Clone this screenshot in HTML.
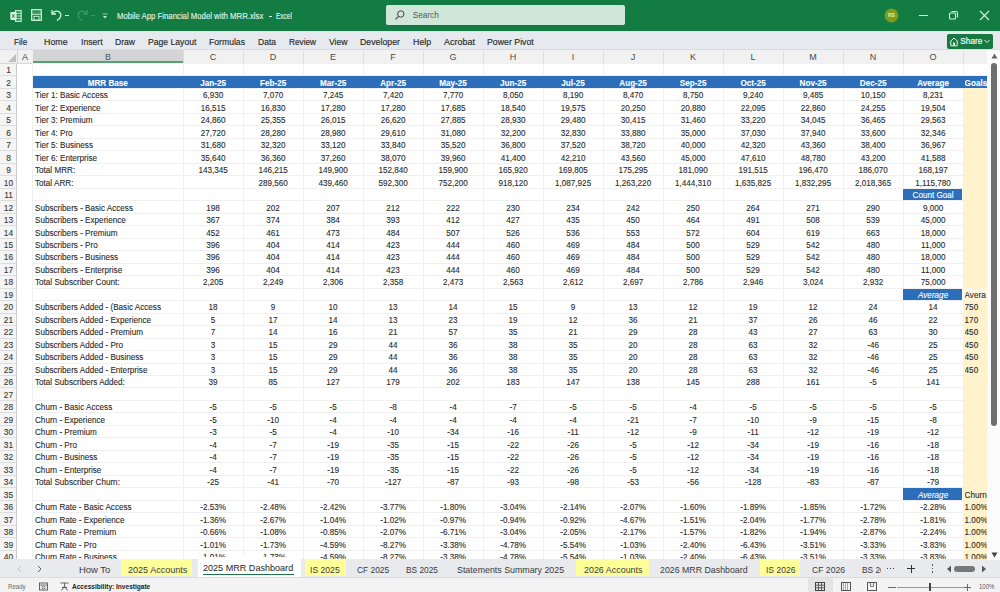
<!DOCTYPE html>
<html><head><meta charset="utf-8">
<style>
*{margin:0;padding:0;box-sizing:border-box}
html,body{width:1000px;height:592px;overflow:hidden;background:#fff;font-family:"Liberation Sans",sans-serif}
#title{position:absolute;left:0;top:0;width:1000px;height:31px;background:#137c43}
#ribbon{position:absolute;left:0;top:31px;width:1000px;height:17.5px;background:#e6e9ee}
.rt{position:absolute;top:35.7px;font-size:9.4px;transform-origin:0 0;color:#2a2a2a;-webkit-text-stroke:0.15px currentColor;white-space:nowrap;line-height:11px}
#colhdr{position:absolute;left:0;top:49.5px;width:988px;height:14px;background:#f1f1f1;border-bottom:1px solid #d8d8d8}
.ch{position:absolute;top:0;height:14px;font-size:9px;color:#4a4a4a;text-align:center;line-height:14px}
.cs{position:absolute;top:1px;width:1px;height:12px;background:#dcdcdc}
#grid{position:absolute;left:0;top:0;width:1000px;height:592px}
.hl{position:absolute;left:32px;width:955px;height:1px;background:#f0f0f0}
.vl{position:absolute;top:63.5px;height:496px;width:1px;background:#f0f0f0}
.yel{position:absolute;left:962.8px;width:24.2px;background:#fff2cc}
#rowhdr{position:absolute;left:0;top:0;width:17.5px;height:559px}
#rowhdrbg{position:absolute;left:0;top:63.5px;width:17px;height:496px;background:#f5f5f5;border-right:1px solid #c8c8c8}
.rn{position:absolute;left:0;width:17px;height:12.48px;font-size:8.4px;line-height:12.48px;padding-top:0.8px;text-align:center;color:#3a3a3a;-webkit-text-stroke:0.12px currentColor}
.rs{position:absolute;left:0;width:17px;height:1px;background:#dddddd}
.c{position:absolute;height:12.48px;font-size:8.13px;line-height:12.48px;padding-top:1.8px;color:#2a2a2a;-webkit-text-stroke:0.1px currentColor;text-align:center;white-space:nowrap;overflow:hidden}
.lab{text-align:left;overflow:visible}
.lft{text-align:left}
.hb{color:#fff;font-weight:bold}
.hdrbar{position:absolute;left:32.5px;width:954.5px;background:#2c6eb9}
.bluecell{position:absolute;background:#2c6eb9}
.wt{color:#fff}
.it{font-style:italic}
#tabs{position:absolute;left:0;top:559.2px;width:1000px;height:18.8px;background:#e8eaee}
.tab{position:absolute;top:560.5px;height:17px;font-size:9.05px;line-height:17px;color:#3a3a3a;white-space:nowrap}
.ytab{background:#ffff99}
#status{position:absolute;left:0;top:578px;width:1000px;height:14px;background:#f3f3f3}
</style></head><body>
<div id="title">
  <!-- excel icon -->
  <svg style="position:absolute;left:10px;top:9.5px" width="12" height="12" viewBox="0 0 12 12">
    <rect x="5.5" y="0.7" width="5.6" height="10.6" fill="none" stroke="#c9f2d6" stroke-width="1.2"/>
    <line x1="6" y1="3.3" x2="11" y2="3.3" stroke="#c9f2d6" stroke-width="1"/>
    <line x1="6" y1="6" x2="11" y2="6" stroke="#c9f2d6" stroke-width="1"/>
    <line x1="6" y1="8.7" x2="11" y2="8.7" stroke="#c9f2d6" stroke-width="1"/>
    <rect x="0.3" y="2" width="6.2" height="8" rx="1.2" fill="#d8f7e2"/>
    <path d="M2.2 4.2 L4.6 7.8 M4.6 4.2 L2.2 7.8" stroke="#1d6b3c" stroke-width="0.9"/>
  </svg>
  <!-- save -->
  <svg style="position:absolute;left:31px;top:9px" width="11" height="12" viewBox="0 0 11 12">
    <rect x="0.7" y="0.7" width="9.6" height="10.6" fill="none" stroke="#c9f2d6" stroke-width="1.3"/>
    <line x1="1" y1="5.2" x2="10" y2="5.2" stroke="#c9f2d6" stroke-width="1.1"/>
    <line x1="1" y1="3" x2="10" y2="3" stroke="#7fcf9c" stroke-width="0.6"/>
    <rect x="3" y="7.3" width="5" height="4" fill="none" stroke="#c9f2d6" stroke-width="1"/>
  </svg>
  <!-- undo -->
  <svg style="position:absolute;left:49px;top:7px" width="16" height="16" viewBox="0 0 16 16">
    <path d="M3 3 L3 7 L7 7" fill="none" stroke="#d6f5e0" stroke-width="1.3"/>
    <path d="M3.5 6.5 C5 3.5 10 3 11.5 6.5 C12.5 9 11 11.5 8 13.5" fill="none" stroke="#d6f5e0" stroke-width="1.3"/>
  </svg>
  <div style="position:absolute;left:65px;top:14.5px;width:4px;height:1px;background:#d6f5e0"></div>
  <!-- redo disabled -->
  <svg style="position:absolute;left:74px;top:7px" width="16" height="16" viewBox="0 0 16 16">
    <path d="M13 3 L13 7 L9 7" fill="none" stroke="#3f9a66" stroke-width="1.3"/>
    <path d="M12.5 6.5 C11 3.5 6 3 4.5 6.5 C3.5 9 5 11.5 8 13.5" fill="none" stroke="#3f9a66" stroke-width="1.3"/>
  </svg>
  <div style="position:absolute;left:91px;top:14.5px;width:4px;height:1px;background:#3f9a66"></div>
  <svg style="position:absolute;left:101px;top:11px" width="8" height="9" viewBox="0 0 8 9">
    <line x1="1.5" y1="3" x2="6.5" y2="3" stroke="#b5e3c5" stroke-width="0.8"/>
    <path d="M2 5 L6 5 L4 7.5 Z" fill="#c9f2d6"/>
  </svg>
  <div style="position:absolute;left:117.2px;top:10.7px;font-size:8.9px;line-height:11px;color:#e3f4e8;white-space:nowrap;-webkit-text-stroke:0.12px #e3f4e8;transform-origin:0 0;transform:scaleX(0.875)">Mobile App Financial Model with MRR.xlsx</div>
  <div style="position:absolute;left:268.5px;top:15.8px;width:3.5px;height:1px;background:#e3f4e8"></div>
  <div style="position:absolute;left:275.5px;top:10.7px;font-size:8.9px;line-height:11px;color:#e3f4e8;white-space:nowrap;-webkit-text-stroke:0.12px #e3f4e8;transform-origin:0 0;transform:scaleX(0.73)">Excel</div>
  <div style="position:absolute;left:386px;top:5px;width:239px;height:20px;background:#d0e6d8;border-radius:2px"></div>
  <svg style="position:absolute;left:394px;top:9px" width="12" height="12" viewBox="0 0 12 12">
    <circle cx="6.8" cy="5" r="3.2" fill="none" stroke="#445" stroke-width="1"/>
    <line x1="4.5" y1="7.3" x2="1.5" y2="10.3" stroke="#445" stroke-width="1.1"/>
  </svg>
  <div style="position:absolute;left:412.8px;top:9.5px;font-size:8.2px;line-height:11px;color:#505860">Search</div>
  <div style="position:absolute;left:884.9px;top:8.9px;width:13px;height:13px;border-radius:50%;background:#7f9d1c;box-shadow:0 0 1.5px #a6b52a"></div>
  <div style="position:absolute;left:884.9px;top:8.9px;width:13px;height:13px;font-size:5px;line-height:13px;text-align:center;color:#e8eea0;font-weight:bold">RS</div>
  <div style="position:absolute;left:919px;top:15px;width:9px;height:1px;background:#e0f0e6"></div>
  <svg style="position:absolute;left:948px;top:10px" width="11" height="11" viewBox="0 0 11 11">
    <rect x="1.5" y="3" width="6" height="6" rx="1" fill="none" stroke="#e0f0e6" stroke-width="1.1"/>
    <path d="M3.5 1.5 L8 1.5 Q9.5 1.5 9.5 3 L9.5 7.5" fill="none" stroke="#e0f0e6" stroke-width="1.1"/>
  </svg>
  <svg style="position:absolute;left:979px;top:10px" width="11" height="11" viewBox="0 0 11 11">
    <line x1="1" y1="1" x2="10" y2="10" stroke="#e0f0e6" stroke-width="1.1"/>
    <line x1="10" y1="1" x2="1" y2="10" stroke="#e0f0e6" stroke-width="1.1"/>
  </svg>
</div>
<div style="position:absolute;left:0;top:31px;width:1000px;height:1px;background:#b9e5c9"></div>
<div id="ribbon"></div>
<div style="position:absolute;left:0;top:48.5px;width:1000px;height:2px;background:#dcdcdc"></div>
<div class="rt" style="left:14px;transform:scaleX(0.874)">File</div>
<div class="rt" style="left:43.5px;transform:scaleX(0.943)">Home</div>
<div class="rt" style="left:80.5px;transform:scaleX(0.921)">Insert</div>
<div class="rt" style="left:115px;transform:scaleX(0.914)">Draw</div>
<div class="rt" style="left:147.5px;transform:scaleX(0.919)">Page Layout</div>
<div class="rt" style="left:209px;transform:scaleX(0.921)">Formulas</div>
<div class="rt" style="left:257.5px;transform:scaleX(0.909)">Data</div>
<div class="rt" style="left:289px;transform:scaleX(0.878)">Review</div>
<div class="rt" style="left:329px;transform:scaleX(0.923)">View</div>
<div class="rt" style="left:360px;transform:scaleX(0.936)">Developer</div>
<div class="rt" style="left:413px;transform:scaleX(0.944)">Help</div>
<div class="rt" style="left:443.5px;transform:scaleX(0.956)">Acrobat</div>
<div class="rt" style="left:487px;transform:scaleX(0.935)">Power Pivot</div>
<div style="position:absolute;left:946.5px;top:33.5px;width:46px;height:15px;background:#17793f;border-radius:2px"></div>
<svg style="position:absolute;left:948.5px;top:35.5px" width="10" height="11" viewBox="0 0 10 11"><path d="M1.8 5.5 L1.8 9.8 L8.2 9.8 L8.2 5.5" fill="none" stroke="#e6f5ea" stroke-width="1"/><path d="M0.8 6 L5 2 L9.2 6" fill="none" stroke="#e6f5ea" stroke-width="1"/><rect x="4" y="6.5" width="2" height="3" fill="#e6f5ea"/></svg>
<div style="position:absolute;left:960.3px;top:35.8px;font-size:8.3px;line-height:11px;color:#f0faf3;-webkit-text-stroke:0.2px #f0faf3">Share</div>
<svg style="position:absolute;left:984px;top:39px" width="6" height="5" viewBox="0 0 6 5"><path d="M0.5 1 L3 3.5 L5.5 1" fill="none" stroke="#e6f5ea" stroke-width="1"/></svg>

<div id="colhdr">
  <svg style="position:absolute;left:8px;top:4.5px" width="8" height="8" viewBox="0 0 8 8"><path d="M8 0 L8 8 L0 8 Z" fill="#bdbdbd"/></svg>
  <div style="position:absolute;left:17px;top:0;width:1px;height:14px;background:#d0d0d0"></div>
  <div class="ch" style="left:17.5px;width:15px">A</div>
  <div style="position:absolute;left:32.5px;top:0;width:150.8px;height:14px;background:#d2d4d6"></div>
  <div style="position:absolute;left:32.5px;top:11.8px;width:150.8px;height:2px;background:#5a9e76"></div>
  <div class="ch" style="left:32.5px;width:150.8px;color:#555">B</div>
  <div class="ch" style="left:183.1px;width:60px">C</div>
<div class="cs" style="left:182.6px"></div>
<div class="ch" style="left:243.1px;width:60px">D</div>
<div class="cs" style="left:242.6px"></div>
<div class="ch" style="left:303.1px;width:60px">E</div>
<div class="cs" style="left:302.6px"></div>
<div class="ch" style="left:363.1px;width:60px">F</div>
<div class="cs" style="left:362.6px"></div>
<div class="ch" style="left:423.1px;width:60px">G</div>
<div class="cs" style="left:422.6px"></div>
<div class="ch" style="left:483.1px;width:60px">H</div>
<div class="cs" style="left:482.6px"></div>
<div class="ch" style="left:543.1px;width:60px">I</div>
<div class="cs" style="left:542.6px"></div>
<div class="ch" style="left:603.1px;width:60px">J</div>
<div class="cs" style="left:602.6px"></div>
<div class="ch" style="left:663.1px;width:60px">K</div>
<div class="cs" style="left:662.6px"></div>
<div class="ch" style="left:723.1px;width:60px">L</div>
<div class="cs" style="left:722.6px"></div>
<div class="ch" style="left:783.1px;width:60px">M</div>
<div class="cs" style="left:782.6px"></div>
<div class="ch" style="left:843.1px;width:60px">N</div>
<div class="cs" style="left:842.6px"></div>
<div class="ch" style="left:903.1px;width:60px">O</div>
<div class="cs" style="left:902.6px"></div>
<div class="cs" style="left:962.6px"></div>
</div>

<div id="rowhdrbg"></div>
<div id="grid">
<div class="hl" style="top:63px"></div>
<div class="hl" style="top:75.48px"></div>
<div class="hl" style="top:87.96px"></div>
<div class="hl" style="top:100.44px"></div>
<div class="hl" style="top:112.92px"></div>
<div class="hl" style="top:125.4px"></div>
<div class="hl" style="top:137.88px"></div>
<div class="hl" style="top:150.36px"></div>
<div class="hl" style="top:162.84px"></div>
<div class="hl" style="top:175.32px"></div>
<div class="hl" style="top:187.8px"></div>
<div class="hl" style="top:200.28px"></div>
<div class="hl" style="top:212.76px"></div>
<div class="hl" style="top:225.24px"></div>
<div class="hl" style="top:237.72px"></div>
<div class="hl" style="top:250.2px"></div>
<div class="hl" style="top:262.68px"></div>
<div class="hl" style="top:275.16px"></div>
<div class="hl" style="top:287.64px"></div>
<div class="hl" style="top:300.12px"></div>
<div class="hl" style="top:312.6px"></div>
<div class="hl" style="top:325.08px"></div>
<div class="hl" style="top:337.56px"></div>
<div class="hl" style="top:350.04px"></div>
<div class="hl" style="top:362.52px"></div>
<div class="hl" style="top:375px"></div>
<div class="hl" style="top:387.48px"></div>
<div class="hl" style="top:399.96px"></div>
<div class="hl" style="top:412.44px"></div>
<div class="hl" style="top:424.92px"></div>
<div class="hl" style="top:437.4px"></div>
<div class="hl" style="top:449.88px"></div>
<div class="hl" style="top:462.36px"></div>
<div class="hl" style="top:474.84px"></div>
<div class="hl" style="top:487.32px"></div>
<div class="hl" style="top:499.8px"></div>
<div class="hl" style="top:512.28px"></div>
<div class="hl" style="top:524.76px"></div>
<div class="hl" style="top:537.24px"></div>
<div class="hl" style="top:549.72px"></div>
<div class="vl" style="left:182.6px"></div>
<div class="vl" style="left:242.6px"></div>
<div class="vl" style="left:302.6px"></div>
<div class="vl" style="left:362.6px"></div>
<div class="vl" style="left:422.6px"></div>
<div class="vl" style="left:482.6px"></div>
<div class="vl" style="left:542.6px"></div>
<div class="vl" style="left:602.6px"></div>
<div class="vl" style="left:662.6px"></div>
<div class="vl" style="left:722.6px"></div>
<div class="vl" style="left:782.6px"></div>
<div class="vl" style="left:842.6px"></div>
<div class="vl" style="left:902.6px"></div>
<div class="vl" style="left:962.6px"></div>
<div class="vl" style="left:32px"></div>
<div class="yel" style="top:87.96px;height:12.48px"></div>
<div class="yel" style="top:100.44px;height:12.48px"></div>
<div class="yel" style="top:112.92px;height:12.48px"></div>
<div class="yel" style="top:125.4px;height:12.48px"></div>
<div class="yel" style="top:137.88px;height:12.48px"></div>
<div class="yel" style="top:150.36px;height:12.48px"></div>
<div class="yel" style="top:162.84px;height:12.48px"></div>
<div class="yel" style="top:175.32px;height:12.48px"></div>
<div class="yel" style="top:187.8px;height:12.48px"></div>
<div class="yel" style="top:200.28px;height:12.48px"></div>
<div class="yel" style="top:212.76px;height:12.48px"></div>
<div class="yel" style="top:225.24px;height:12.48px"></div>
<div class="yel" style="top:237.72px;height:12.48px"></div>
<div class="yel" style="top:250.2px;height:12.48px"></div>
<div class="yel" style="top:262.68px;height:12.48px"></div>
<div class="yel" style="top:275.16px;height:12.48px"></div>
<div class="yel" style="top:287.64px;height:12.48px;background:#fff6e2"></div>
<div class="yel" style="top:300.12px;height:12.48px"></div>
<div class="yel" style="top:312.6px;height:12.48px"></div>
<div class="yel" style="top:325.08px;height:12.48px"></div>
<div class="yel" style="top:337.56px;height:12.48px"></div>
<div class="yel" style="top:350.04px;height:12.48px"></div>
<div class="yel" style="top:362.52px;height:12.48px"></div>
<div class="yel" style="top:375px;height:12.48px"></div>
<div class="yel" style="top:387.48px;height:12.48px"></div>
<div class="yel" style="top:399.96px;height:12.48px"></div>
<div class="yel" style="top:412.44px;height:12.48px"></div>
<div class="yel" style="top:424.92px;height:12.48px"></div>
<div class="yel" style="top:437.4px;height:12.48px"></div>
<div class="yel" style="top:449.88px;height:12.48px"></div>
<div class="yel" style="top:462.36px;height:12.48px"></div>
<div class="yel" style="top:474.84px;height:12.48px"></div>
<div class="yel" style="top:487.32px;height:12.48px"></div>
<div class="yel" style="top:499.8px;height:12.48px"></div>
<div class="yel" style="top:512.28px;height:12.48px"></div>
<div class="yel" style="top:524.76px;height:12.48px"></div>
<div class="yel" style="top:537.24px;height:12.48px"></div>
<div class="yel" style="top:549.72px;height:12.48px"></div>
<div id="rowhdr"><div class="rn" style="top:63.5px">1</div>
<div class="rs" style="top:75.48px"></div>
<div class="rn" style="top:75.98px">2</div>
<div class="rs" style="top:87.96px"></div>
<div class="rn" style="top:88.46px">3</div>
<div class="rs" style="top:100.44px"></div>
<div class="rn" style="top:100.94px">4</div>
<div class="rs" style="top:112.92px"></div>
<div class="rn" style="top:113.42px">5</div>
<div class="rs" style="top:125.4px"></div>
<div class="rn" style="top:125.9px">6</div>
<div class="rs" style="top:137.88px"></div>
<div class="rn" style="top:138.38px">7</div>
<div class="rs" style="top:150.36px"></div>
<div class="rn" style="top:150.86px">8</div>
<div class="rs" style="top:162.84px"></div>
<div class="rn" style="top:163.34px">9</div>
<div class="rs" style="top:175.32px"></div>
<div class="rn" style="top:175.82px">10</div>
<div class="rs" style="top:187.8px"></div>
<div class="rn" style="top:188.3px">11</div>
<div class="rs" style="top:200.28px"></div>
<div class="rn" style="top:200.78px">12</div>
<div class="rs" style="top:212.76px"></div>
<div class="rn" style="top:213.26px">13</div>
<div class="rs" style="top:225.24px"></div>
<div class="rn" style="top:225.74px">14</div>
<div class="rs" style="top:237.72px"></div>
<div class="rn" style="top:238.22px">15</div>
<div class="rs" style="top:250.2px"></div>
<div class="rn" style="top:250.7px">16</div>
<div class="rs" style="top:262.68px"></div>
<div class="rn" style="top:263.18px">17</div>
<div class="rs" style="top:275.16px"></div>
<div class="rn" style="top:275.66px">18</div>
<div class="rs" style="top:287.64px"></div>
<div class="rn" style="top:288.14px">19</div>
<div class="rs" style="top:300.12px"></div>
<div class="rn" style="top:300.62px">20</div>
<div class="rs" style="top:312.6px"></div>
<div class="rn" style="top:313.1px">21</div>
<div class="rs" style="top:325.08px"></div>
<div class="rn" style="top:325.58px">22</div>
<div class="rs" style="top:337.56px"></div>
<div class="rn" style="top:338.06px">23</div>
<div class="rs" style="top:350.04px"></div>
<div class="rn" style="top:350.54px">24</div>
<div class="rs" style="top:362.52px"></div>
<div class="rn" style="top:363.02px">25</div>
<div class="rs" style="top:375px"></div>
<div class="rn" style="top:375.5px">26</div>
<div class="rs" style="top:387.48px"></div>
<div class="rn" style="top:387.98px">27</div>
<div class="rs" style="top:399.96px"></div>
<div class="rn" style="top:400.46px">28</div>
<div class="rs" style="top:412.44px"></div>
<div class="rn" style="top:412.94px">29</div>
<div class="rs" style="top:424.92px"></div>
<div class="rn" style="top:425.42px">30</div>
<div class="rs" style="top:437.4px"></div>
<div class="rn" style="top:437.9px">31</div>
<div class="rs" style="top:449.88px"></div>
<div class="rn" style="top:450.38px">32</div>
<div class="rs" style="top:462.36px"></div>
<div class="rn" style="top:462.86px">33</div>
<div class="rs" style="top:474.84px"></div>
<div class="rn" style="top:475.34px">34</div>
<div class="rs" style="top:487.32px"></div>
<div class="rn" style="top:487.82px">35</div>
<div class="rs" style="top:499.8px"></div>
<div class="rn" style="top:500.3px">36</div>
<div class="rs" style="top:512.28px"></div>
<div class="rn" style="top:512.78px">37</div>
<div class="rs" style="top:524.76px"></div>
<div class="rn" style="top:525.26px">38</div>
<div class="rs" style="top:537.24px"></div>
<div class="rn" style="top:537.74px">39</div>
<div class="rs" style="top:549.72px"></div>
<div class="rn" style="top:550.22px">40</div>
<div class="rs" style="top:562.2px"></div></div>
<div class="hdrbar" style="top:75.98px;height:12.48px"></div>
<div class="c hb" style="top:75.98px;left:32.5px;width:150.6px">MRR Base</div>
<div class="c hb" style="top:75.98px;left:183.1px;width:60px">Jan-25</div>
<div class="c hb" style="top:75.98px;left:243.1px;width:60px">Feb-25</div>
<div class="c hb" style="top:75.98px;left:303.1px;width:60px">Mar-25</div>
<div class="c hb" style="top:75.98px;left:363.1px;width:60px">Apr-25</div>
<div class="c hb" style="top:75.98px;left:423.1px;width:60px">May-25</div>
<div class="c hb" style="top:75.98px;left:483.1px;width:60px">Jun-25</div>
<div class="c hb" style="top:75.98px;left:543.1px;width:60px">Jul-25</div>
<div class="c hb" style="top:75.98px;left:603.1px;width:60px">Aug-25</div>
<div class="c hb" style="top:75.98px;left:663.1px;width:60px">Sep-25</div>
<div class="c hb" style="top:75.98px;left:723.1px;width:60px">Oct-25</div>
<div class="c hb" style="top:75.98px;left:783.1px;width:60px">Nov-25</div>
<div class="c hb" style="top:75.98px;left:843.1px;width:60px">Dec-25</div>
<div class="c hb" style="top:75.98px;left:903.1px;width:60px">Average</div>
<div class="c hb lft" style="top:75.98px;left:964.6px;width:22.4px">Goals</div>
<div class="c lab" style="top:88.46px;left:35px">Tier 1: Basic Access</div>
<div class="c" style="top:88.46px;left:183.1px;width:60px">6,930</div>
<div class="c" style="top:88.46px;left:243.1px;width:60px">7,070</div>
<div class="c" style="top:88.46px;left:303.1px;width:60px">7,245</div>
<div class="c" style="top:88.46px;left:363.1px;width:60px">7,420</div>
<div class="c" style="top:88.46px;left:423.1px;width:60px">7,770</div>
<div class="c" style="top:88.46px;left:483.1px;width:60px">8,050</div>
<div class="c" style="top:88.46px;left:543.1px;width:60px">8,190</div>
<div class="c" style="top:88.46px;left:603.1px;width:60px">8,470</div>
<div class="c" style="top:88.46px;left:663.1px;width:60px">8,750</div>
<div class="c" style="top:88.46px;left:723.1px;width:60px">9,240</div>
<div class="c" style="top:88.46px;left:783.1px;width:60px">9,485</div>
<div class="c" style="top:88.46px;left:843.1px;width:60px">10,150</div>
<div class="c" style="top:88.46px;left:903.1px;width:60px">8,231</div>
<div class="c lab" style="top:100.94px;left:35px">Tier 2: Experience</div>
<div class="c" style="top:100.94px;left:183.1px;width:60px">16,515</div>
<div class="c" style="top:100.94px;left:243.1px;width:60px">16,830</div>
<div class="c" style="top:100.94px;left:303.1px;width:60px">17,280</div>
<div class="c" style="top:100.94px;left:363.1px;width:60px">17,280</div>
<div class="c" style="top:100.94px;left:423.1px;width:60px">17,685</div>
<div class="c" style="top:100.94px;left:483.1px;width:60px">18,540</div>
<div class="c" style="top:100.94px;left:543.1px;width:60px">19,575</div>
<div class="c" style="top:100.94px;left:603.1px;width:60px">20,250</div>
<div class="c" style="top:100.94px;left:663.1px;width:60px">20,880</div>
<div class="c" style="top:100.94px;left:723.1px;width:60px">22,095</div>
<div class="c" style="top:100.94px;left:783.1px;width:60px">22,860</div>
<div class="c" style="top:100.94px;left:843.1px;width:60px">24,255</div>
<div class="c" style="top:100.94px;left:903.1px;width:60px">19,504</div>
<div class="c lab" style="top:113.42px;left:35px">Tier 3: Premium</div>
<div class="c" style="top:113.42px;left:183.1px;width:60px">24,860</div>
<div class="c" style="top:113.42px;left:243.1px;width:60px">25,355</div>
<div class="c" style="top:113.42px;left:303.1px;width:60px">26,015</div>
<div class="c" style="top:113.42px;left:363.1px;width:60px">26,620</div>
<div class="c" style="top:113.42px;left:423.1px;width:60px">27,885</div>
<div class="c" style="top:113.42px;left:483.1px;width:60px">28,930</div>
<div class="c" style="top:113.42px;left:543.1px;width:60px">29,480</div>
<div class="c" style="top:113.42px;left:603.1px;width:60px">30,415</div>
<div class="c" style="top:113.42px;left:663.1px;width:60px">31,460</div>
<div class="c" style="top:113.42px;left:723.1px;width:60px">33,220</div>
<div class="c" style="top:113.42px;left:783.1px;width:60px">34,045</div>
<div class="c" style="top:113.42px;left:843.1px;width:60px">36,465</div>
<div class="c" style="top:113.42px;left:903.1px;width:60px">29,563</div>
<div class="c lab" style="top:125.9px;left:35px">Tier 4: Pro</div>
<div class="c" style="top:125.9px;left:183.1px;width:60px">27,720</div>
<div class="c" style="top:125.9px;left:243.1px;width:60px">28,280</div>
<div class="c" style="top:125.9px;left:303.1px;width:60px">28,980</div>
<div class="c" style="top:125.9px;left:363.1px;width:60px">29,610</div>
<div class="c" style="top:125.9px;left:423.1px;width:60px">31,080</div>
<div class="c" style="top:125.9px;left:483.1px;width:60px">32,200</div>
<div class="c" style="top:125.9px;left:543.1px;width:60px">32,830</div>
<div class="c" style="top:125.9px;left:603.1px;width:60px">33,880</div>
<div class="c" style="top:125.9px;left:663.1px;width:60px">35,000</div>
<div class="c" style="top:125.9px;left:723.1px;width:60px">37,030</div>
<div class="c" style="top:125.9px;left:783.1px;width:60px">37,940</div>
<div class="c" style="top:125.9px;left:843.1px;width:60px">33,600</div>
<div class="c" style="top:125.9px;left:903.1px;width:60px">32,346</div>
<div class="c lab" style="top:138.38px;left:35px">Tier 5: Business</div>
<div class="c" style="top:138.38px;left:183.1px;width:60px">31,680</div>
<div class="c" style="top:138.38px;left:243.1px;width:60px">32,320</div>
<div class="c" style="top:138.38px;left:303.1px;width:60px">33,120</div>
<div class="c" style="top:138.38px;left:363.1px;width:60px">33,840</div>
<div class="c" style="top:138.38px;left:423.1px;width:60px">35,520</div>
<div class="c" style="top:138.38px;left:483.1px;width:60px">36,800</div>
<div class="c" style="top:138.38px;left:543.1px;width:60px">37,520</div>
<div class="c" style="top:138.38px;left:603.1px;width:60px">38,720</div>
<div class="c" style="top:138.38px;left:663.1px;width:60px">40,000</div>
<div class="c" style="top:138.38px;left:723.1px;width:60px">42,320</div>
<div class="c" style="top:138.38px;left:783.1px;width:60px">43,360</div>
<div class="c" style="top:138.38px;left:843.1px;width:60px">38,400</div>
<div class="c" style="top:138.38px;left:903.1px;width:60px">36,967</div>
<div class="c lab" style="top:150.86px;left:35px">Tier 6: Enterprise</div>
<div class="c" style="top:150.86px;left:183.1px;width:60px">35,640</div>
<div class="c" style="top:150.86px;left:243.1px;width:60px">36,360</div>
<div class="c" style="top:150.86px;left:303.1px;width:60px">37,260</div>
<div class="c" style="top:150.86px;left:363.1px;width:60px">38,070</div>
<div class="c" style="top:150.86px;left:423.1px;width:60px">39,960</div>
<div class="c" style="top:150.86px;left:483.1px;width:60px">41,400</div>
<div class="c" style="top:150.86px;left:543.1px;width:60px">42,210</div>
<div class="c" style="top:150.86px;left:603.1px;width:60px">43,560</div>
<div class="c" style="top:150.86px;left:663.1px;width:60px">45,000</div>
<div class="c" style="top:150.86px;left:723.1px;width:60px">47,610</div>
<div class="c" style="top:150.86px;left:783.1px;width:60px">48,780</div>
<div class="c" style="top:150.86px;left:843.1px;width:60px">43,200</div>
<div class="c" style="top:150.86px;left:903.1px;width:60px">41,588</div>
<div class="c lab" style="top:163.34px;left:35px">Total MRR:</div>
<div class="c" style="top:163.34px;left:183.1px;width:60px">143,345</div>
<div class="c" style="top:163.34px;left:243.1px;width:60px">146,215</div>
<div class="c" style="top:163.34px;left:303.1px;width:60px">149,900</div>
<div class="c" style="top:163.34px;left:363.1px;width:60px">152,840</div>
<div class="c" style="top:163.34px;left:423.1px;width:60px">159,900</div>
<div class="c" style="top:163.34px;left:483.1px;width:60px">165,920</div>
<div class="c" style="top:163.34px;left:543.1px;width:60px">169,805</div>
<div class="c" style="top:163.34px;left:603.1px;width:60px">175,295</div>
<div class="c" style="top:163.34px;left:663.1px;width:60px">181,090</div>
<div class="c" style="top:163.34px;left:723.1px;width:60px">191,515</div>
<div class="c" style="top:163.34px;left:783.1px;width:60px">196,470</div>
<div class="c" style="top:163.34px;left:843.1px;width:60px">186,070</div>
<div class="c" style="top:163.34px;left:903.1px;width:60px">168,197</div>
<div class="c lab" style="top:175.82px;left:35px">Total ARR:</div>
<div class="c" style="top:175.82px;left:243.1px;width:60px">289,560</div>
<div class="c" style="top:175.82px;left:303.1px;width:60px">439,460</div>
<div class="c" style="top:175.82px;left:363.1px;width:60px">592,300</div>
<div class="c" style="top:175.82px;left:423.1px;width:60px">752,200</div>
<div class="c" style="top:175.82px;left:483.1px;width:60px">918,120</div>
<div class="c" style="top:175.82px;left:543.1px;width:60px">1,087,925</div>
<div class="c" style="top:175.82px;left:603.1px;width:60px">1,263,220</div>
<div class="c" style="top:175.82px;left:663.1px;width:60px">1,444,310</div>
<div class="c" style="top:175.82px;left:723.1px;width:60px">1,635,825</div>
<div class="c" style="top:175.82px;left:783.1px;width:60px">1,832,295</div>
<div class="c" style="top:175.82px;left:843.1px;width:60px">2,018,365</div>
<div class="c" style="top:175.82px;left:903.1px;width:60px">1,115,780</div>
<div class="bluecell" style="top:188.8px;left:902.8px;width:59.3px;height:11.58px"></div>
<div class="c wt" style="top:188.3px;left:903.1px;width:60px">Count Goal</div>
<div class="c lab" style="top:200.78px;left:35px">Subscribers - Basic Access</div>
<div class="c" style="top:200.78px;left:183.1px;width:60px">198</div>
<div class="c" style="top:200.78px;left:243.1px;width:60px">202</div>
<div class="c" style="top:200.78px;left:303.1px;width:60px">207</div>
<div class="c" style="top:200.78px;left:363.1px;width:60px">212</div>
<div class="c" style="top:200.78px;left:423.1px;width:60px">222</div>
<div class="c" style="top:200.78px;left:483.1px;width:60px">230</div>
<div class="c" style="top:200.78px;left:543.1px;width:60px">234</div>
<div class="c" style="top:200.78px;left:603.1px;width:60px">242</div>
<div class="c" style="top:200.78px;left:663.1px;width:60px">250</div>
<div class="c" style="top:200.78px;left:723.1px;width:60px">264</div>
<div class="c" style="top:200.78px;left:783.1px;width:60px">271</div>
<div class="c" style="top:200.78px;left:843.1px;width:60px">290</div>
<div class="c" style="top:200.78px;left:903.1px;width:60px">9,000</div>
<div class="c lab" style="top:213.26px;left:35px">Subscribers - Experience</div>
<div class="c" style="top:213.26px;left:183.1px;width:60px">367</div>
<div class="c" style="top:213.26px;left:243.1px;width:60px">374</div>
<div class="c" style="top:213.26px;left:303.1px;width:60px">384</div>
<div class="c" style="top:213.26px;left:363.1px;width:60px">393</div>
<div class="c" style="top:213.26px;left:423.1px;width:60px">412</div>
<div class="c" style="top:213.26px;left:483.1px;width:60px">427</div>
<div class="c" style="top:213.26px;left:543.1px;width:60px">435</div>
<div class="c" style="top:213.26px;left:603.1px;width:60px">450</div>
<div class="c" style="top:213.26px;left:663.1px;width:60px">464</div>
<div class="c" style="top:213.26px;left:723.1px;width:60px">491</div>
<div class="c" style="top:213.26px;left:783.1px;width:60px">508</div>
<div class="c" style="top:213.26px;left:843.1px;width:60px">539</div>
<div class="c" style="top:213.26px;left:903.1px;width:60px">45,000</div>
<div class="c lab" style="top:225.74px;left:35px">Subscribers - Premium</div>
<div class="c" style="top:225.74px;left:183.1px;width:60px">452</div>
<div class="c" style="top:225.74px;left:243.1px;width:60px">461</div>
<div class="c" style="top:225.74px;left:303.1px;width:60px">473</div>
<div class="c" style="top:225.74px;left:363.1px;width:60px">484</div>
<div class="c" style="top:225.74px;left:423.1px;width:60px">507</div>
<div class="c" style="top:225.74px;left:483.1px;width:60px">526</div>
<div class="c" style="top:225.74px;left:543.1px;width:60px">536</div>
<div class="c" style="top:225.74px;left:603.1px;width:60px">553</div>
<div class="c" style="top:225.74px;left:663.1px;width:60px">572</div>
<div class="c" style="top:225.74px;left:723.1px;width:60px">604</div>
<div class="c" style="top:225.74px;left:783.1px;width:60px">619</div>
<div class="c" style="top:225.74px;left:843.1px;width:60px">663</div>
<div class="c" style="top:225.74px;left:903.1px;width:60px">18,000</div>
<div class="c lab" style="top:238.22px;left:35px">Subscribers - Pro</div>
<div class="c" style="top:238.22px;left:183.1px;width:60px">396</div>
<div class="c" style="top:238.22px;left:243.1px;width:60px">404</div>
<div class="c" style="top:238.22px;left:303.1px;width:60px">414</div>
<div class="c" style="top:238.22px;left:363.1px;width:60px">423</div>
<div class="c" style="top:238.22px;left:423.1px;width:60px">444</div>
<div class="c" style="top:238.22px;left:483.1px;width:60px">460</div>
<div class="c" style="top:238.22px;left:543.1px;width:60px">469</div>
<div class="c" style="top:238.22px;left:603.1px;width:60px">484</div>
<div class="c" style="top:238.22px;left:663.1px;width:60px">500</div>
<div class="c" style="top:238.22px;left:723.1px;width:60px">529</div>
<div class="c" style="top:238.22px;left:783.1px;width:60px">542</div>
<div class="c" style="top:238.22px;left:843.1px;width:60px">480</div>
<div class="c" style="top:238.22px;left:903.1px;width:60px">11,000</div>
<div class="c lab" style="top:250.7px;left:35px">Subscribers - Business</div>
<div class="c" style="top:250.7px;left:183.1px;width:60px">396</div>
<div class="c" style="top:250.7px;left:243.1px;width:60px">404</div>
<div class="c" style="top:250.7px;left:303.1px;width:60px">414</div>
<div class="c" style="top:250.7px;left:363.1px;width:60px">423</div>
<div class="c" style="top:250.7px;left:423.1px;width:60px">444</div>
<div class="c" style="top:250.7px;left:483.1px;width:60px">460</div>
<div class="c" style="top:250.7px;left:543.1px;width:60px">469</div>
<div class="c" style="top:250.7px;left:603.1px;width:60px">484</div>
<div class="c" style="top:250.7px;left:663.1px;width:60px">500</div>
<div class="c" style="top:250.7px;left:723.1px;width:60px">529</div>
<div class="c" style="top:250.7px;left:783.1px;width:60px">542</div>
<div class="c" style="top:250.7px;left:843.1px;width:60px">480</div>
<div class="c" style="top:250.7px;left:903.1px;width:60px">18,000</div>
<div class="c lab" style="top:263.18px;left:35px">Subscribers - Enterprise</div>
<div class="c" style="top:263.18px;left:183.1px;width:60px">396</div>
<div class="c" style="top:263.18px;left:243.1px;width:60px">404</div>
<div class="c" style="top:263.18px;left:303.1px;width:60px">414</div>
<div class="c" style="top:263.18px;left:363.1px;width:60px">423</div>
<div class="c" style="top:263.18px;left:423.1px;width:60px">444</div>
<div class="c" style="top:263.18px;left:483.1px;width:60px">460</div>
<div class="c" style="top:263.18px;left:543.1px;width:60px">469</div>
<div class="c" style="top:263.18px;left:603.1px;width:60px">484</div>
<div class="c" style="top:263.18px;left:663.1px;width:60px">500</div>
<div class="c" style="top:263.18px;left:723.1px;width:60px">529</div>
<div class="c" style="top:263.18px;left:783.1px;width:60px">542</div>
<div class="c" style="top:263.18px;left:843.1px;width:60px">480</div>
<div class="c" style="top:263.18px;left:903.1px;width:60px">11,000</div>
<div class="c lab" style="top:275.66px;left:35px">Total Subscriber Count:</div>
<div class="c" style="top:275.66px;left:183.1px;width:60px">2,205</div>
<div class="c" style="top:275.66px;left:243.1px;width:60px">2,249</div>
<div class="c" style="top:275.66px;left:303.1px;width:60px">2,306</div>
<div class="c" style="top:275.66px;left:363.1px;width:60px">2,358</div>
<div class="c" style="top:275.66px;left:423.1px;width:60px">2,473</div>
<div class="c" style="top:275.66px;left:483.1px;width:60px">2,563</div>
<div class="c" style="top:275.66px;left:543.1px;width:60px">2,612</div>
<div class="c" style="top:275.66px;left:603.1px;width:60px">2,697</div>
<div class="c" style="top:275.66px;left:663.1px;width:60px">2,786</div>
<div class="c" style="top:275.66px;left:723.1px;width:60px">2,946</div>
<div class="c" style="top:275.66px;left:783.1px;width:60px">3,024</div>
<div class="c" style="top:275.66px;left:843.1px;width:60px">2,932</div>
<div class="c" style="top:275.66px;left:903.1px;width:60px">75,000</div>
<div class="bluecell" style="top:288.64px;left:902.8px;width:59.3px;height:11.58px"></div>
<div class="c wt it" style="top:288.14px;left:903.1px;width:60px">Average</div>
<div class="c lft" style="top:288.14px;left:964.6px;width:22.4px">Avera</div>
<div class="c lab" style="top:300.62px;left:35px">Subscribers Added - (Basic Access</div>
<div class="c" style="top:300.62px;left:183.1px;width:60px">18</div>
<div class="c" style="top:300.62px;left:243.1px;width:60px">9</div>
<div class="c" style="top:300.62px;left:303.1px;width:60px">10</div>
<div class="c" style="top:300.62px;left:363.1px;width:60px">13</div>
<div class="c" style="top:300.62px;left:423.1px;width:60px">14</div>
<div class="c" style="top:300.62px;left:483.1px;width:60px">15</div>
<div class="c" style="top:300.62px;left:543.1px;width:60px">9</div>
<div class="c" style="top:300.62px;left:603.1px;width:60px">13</div>
<div class="c" style="top:300.62px;left:663.1px;width:60px">12</div>
<div class="c" style="top:300.62px;left:723.1px;width:60px">19</div>
<div class="c" style="top:300.62px;left:783.1px;width:60px">12</div>
<div class="c" style="top:300.62px;left:843.1px;width:60px">24</div>
<div class="c" style="top:300.62px;left:903.1px;width:60px">14</div>
<div class="c lft" style="top:300.62px;left:964.6px;width:22.4px">750</div>
<div class="c lab" style="top:313.1px;left:35px">Subscribers Added - Experience</div>
<div class="c" style="top:313.1px;left:183.1px;width:60px">5</div>
<div class="c" style="top:313.1px;left:243.1px;width:60px">17</div>
<div class="c" style="top:313.1px;left:303.1px;width:60px">14</div>
<div class="c" style="top:313.1px;left:363.1px;width:60px">13</div>
<div class="c" style="top:313.1px;left:423.1px;width:60px">23</div>
<div class="c" style="top:313.1px;left:483.1px;width:60px">19</div>
<div class="c" style="top:313.1px;left:543.1px;width:60px">12</div>
<div class="c" style="top:313.1px;left:603.1px;width:60px">36</div>
<div class="c" style="top:313.1px;left:663.1px;width:60px">21</div>
<div class="c" style="top:313.1px;left:723.1px;width:60px">37</div>
<div class="c" style="top:313.1px;left:783.1px;width:60px">26</div>
<div class="c" style="top:313.1px;left:843.1px;width:60px">46</div>
<div class="c" style="top:313.1px;left:903.1px;width:60px">22</div>
<div class="c lft" style="top:313.1px;left:964.6px;width:22.4px">170</div>
<div class="c lab" style="top:325.58px;left:35px">Subscribers Added - Premium</div>
<div class="c" style="top:325.58px;left:183.1px;width:60px">7</div>
<div class="c" style="top:325.58px;left:243.1px;width:60px">14</div>
<div class="c" style="top:325.58px;left:303.1px;width:60px">16</div>
<div class="c" style="top:325.58px;left:363.1px;width:60px">21</div>
<div class="c" style="top:325.58px;left:423.1px;width:60px">57</div>
<div class="c" style="top:325.58px;left:483.1px;width:60px">35</div>
<div class="c" style="top:325.58px;left:543.1px;width:60px">21</div>
<div class="c" style="top:325.58px;left:603.1px;width:60px">29</div>
<div class="c" style="top:325.58px;left:663.1px;width:60px">28</div>
<div class="c" style="top:325.58px;left:723.1px;width:60px">43</div>
<div class="c" style="top:325.58px;left:783.1px;width:60px">27</div>
<div class="c" style="top:325.58px;left:843.1px;width:60px">63</div>
<div class="c" style="top:325.58px;left:903.1px;width:60px">30</div>
<div class="c lft" style="top:325.58px;left:964.6px;width:22.4px">450</div>
<div class="c lab" style="top:338.06px;left:35px">Subscribers Added - Pro</div>
<div class="c" style="top:338.06px;left:183.1px;width:60px">3</div>
<div class="c" style="top:338.06px;left:243.1px;width:60px">15</div>
<div class="c" style="top:338.06px;left:303.1px;width:60px">29</div>
<div class="c" style="top:338.06px;left:363.1px;width:60px">44</div>
<div class="c" style="top:338.06px;left:423.1px;width:60px">36</div>
<div class="c" style="top:338.06px;left:483.1px;width:60px">38</div>
<div class="c" style="top:338.06px;left:543.1px;width:60px">35</div>
<div class="c" style="top:338.06px;left:603.1px;width:60px">20</div>
<div class="c" style="top:338.06px;left:663.1px;width:60px">28</div>
<div class="c" style="top:338.06px;left:723.1px;width:60px">63</div>
<div class="c" style="top:338.06px;left:783.1px;width:60px">32</div>
<div class="c" style="top:338.06px;left:843.1px;width:60px">-46</div>
<div class="c" style="top:338.06px;left:903.1px;width:60px">25</div>
<div class="c lft" style="top:338.06px;left:964.6px;width:22.4px">450</div>
<div class="c lab" style="top:350.54px;left:35px">Subscribers Added - Business</div>
<div class="c" style="top:350.54px;left:183.1px;width:60px">3</div>
<div class="c" style="top:350.54px;left:243.1px;width:60px">15</div>
<div class="c" style="top:350.54px;left:303.1px;width:60px">29</div>
<div class="c" style="top:350.54px;left:363.1px;width:60px">44</div>
<div class="c" style="top:350.54px;left:423.1px;width:60px">36</div>
<div class="c" style="top:350.54px;left:483.1px;width:60px">38</div>
<div class="c" style="top:350.54px;left:543.1px;width:60px">35</div>
<div class="c" style="top:350.54px;left:603.1px;width:60px">20</div>
<div class="c" style="top:350.54px;left:663.1px;width:60px">28</div>
<div class="c" style="top:350.54px;left:723.1px;width:60px">63</div>
<div class="c" style="top:350.54px;left:783.1px;width:60px">32</div>
<div class="c" style="top:350.54px;left:843.1px;width:60px">-46</div>
<div class="c" style="top:350.54px;left:903.1px;width:60px">25</div>
<div class="c lft" style="top:350.54px;left:964.6px;width:22.4px">450</div>
<div class="c lab" style="top:363.02px;left:35px">Subscribers Added - Enterprise</div>
<div class="c" style="top:363.02px;left:183.1px;width:60px">3</div>
<div class="c" style="top:363.02px;left:243.1px;width:60px">15</div>
<div class="c" style="top:363.02px;left:303.1px;width:60px">29</div>
<div class="c" style="top:363.02px;left:363.1px;width:60px">44</div>
<div class="c" style="top:363.02px;left:423.1px;width:60px">36</div>
<div class="c" style="top:363.02px;left:483.1px;width:60px">38</div>
<div class="c" style="top:363.02px;left:543.1px;width:60px">35</div>
<div class="c" style="top:363.02px;left:603.1px;width:60px">20</div>
<div class="c" style="top:363.02px;left:663.1px;width:60px">28</div>
<div class="c" style="top:363.02px;left:723.1px;width:60px">63</div>
<div class="c" style="top:363.02px;left:783.1px;width:60px">32</div>
<div class="c" style="top:363.02px;left:843.1px;width:60px">-46</div>
<div class="c" style="top:363.02px;left:903.1px;width:60px">25</div>
<div class="c lft" style="top:363.02px;left:964.6px;width:22.4px">450</div>
<div class="c lab" style="top:375.5px;left:35px">Total Subscribers Added:</div>
<div class="c" style="top:375.5px;left:183.1px;width:60px">39</div>
<div class="c" style="top:375.5px;left:243.1px;width:60px">85</div>
<div class="c" style="top:375.5px;left:303.1px;width:60px">127</div>
<div class="c" style="top:375.5px;left:363.1px;width:60px">179</div>
<div class="c" style="top:375.5px;left:423.1px;width:60px">202</div>
<div class="c" style="top:375.5px;left:483.1px;width:60px">183</div>
<div class="c" style="top:375.5px;left:543.1px;width:60px">147</div>
<div class="c" style="top:375.5px;left:603.1px;width:60px">138</div>
<div class="c" style="top:375.5px;left:663.1px;width:60px">145</div>
<div class="c" style="top:375.5px;left:723.1px;width:60px">288</div>
<div class="c" style="top:375.5px;left:783.1px;width:60px">161</div>
<div class="c" style="top:375.5px;left:843.1px;width:60px">-5</div>
<div class="c" style="top:375.5px;left:903.1px;width:60px">141</div>
<div class="c lab" style="top:400.46px;left:35px">Churn - Basic Access</div>
<div class="c" style="top:400.46px;left:183.1px;width:60px">-5</div>
<div class="c" style="top:400.46px;left:243.1px;width:60px">-5</div>
<div class="c" style="top:400.46px;left:303.1px;width:60px">-5</div>
<div class="c" style="top:400.46px;left:363.1px;width:60px">-8</div>
<div class="c" style="top:400.46px;left:423.1px;width:60px">-4</div>
<div class="c" style="top:400.46px;left:483.1px;width:60px">-7</div>
<div class="c" style="top:400.46px;left:543.1px;width:60px">-5</div>
<div class="c" style="top:400.46px;left:603.1px;width:60px">-5</div>
<div class="c" style="top:400.46px;left:663.1px;width:60px">-4</div>
<div class="c" style="top:400.46px;left:723.1px;width:60px">-5</div>
<div class="c" style="top:400.46px;left:783.1px;width:60px">-5</div>
<div class="c" style="top:400.46px;left:843.1px;width:60px">-5</div>
<div class="c" style="top:400.46px;left:903.1px;width:60px">-5</div>
<div class="c lab" style="top:412.94px;left:35px">Churn - Experience</div>
<div class="c" style="top:412.94px;left:183.1px;width:60px">-5</div>
<div class="c" style="top:412.94px;left:243.1px;width:60px">-10</div>
<div class="c" style="top:412.94px;left:303.1px;width:60px">-4</div>
<div class="c" style="top:412.94px;left:363.1px;width:60px">-4</div>
<div class="c" style="top:412.94px;left:423.1px;width:60px">-4</div>
<div class="c" style="top:412.94px;left:483.1px;width:60px">-4</div>
<div class="c" style="top:412.94px;left:543.1px;width:60px">-4</div>
<div class="c" style="top:412.94px;left:603.1px;width:60px">-21</div>
<div class="c" style="top:412.94px;left:663.1px;width:60px">-7</div>
<div class="c" style="top:412.94px;left:723.1px;width:60px">-10</div>
<div class="c" style="top:412.94px;left:783.1px;width:60px">-9</div>
<div class="c" style="top:412.94px;left:843.1px;width:60px">-15</div>
<div class="c" style="top:412.94px;left:903.1px;width:60px">-8</div>
<div class="c lab" style="top:425.42px;left:35px">Churn - Premium</div>
<div class="c" style="top:425.42px;left:183.1px;width:60px">-3</div>
<div class="c" style="top:425.42px;left:243.1px;width:60px">-5</div>
<div class="c" style="top:425.42px;left:303.1px;width:60px">-4</div>
<div class="c" style="top:425.42px;left:363.1px;width:60px">-10</div>
<div class="c" style="top:425.42px;left:423.1px;width:60px">-34</div>
<div class="c" style="top:425.42px;left:483.1px;width:60px">-16</div>
<div class="c" style="top:425.42px;left:543.1px;width:60px">-11</div>
<div class="c" style="top:425.42px;left:603.1px;width:60px">-12</div>
<div class="c" style="top:425.42px;left:663.1px;width:60px">-9</div>
<div class="c" style="top:425.42px;left:723.1px;width:60px">-11</div>
<div class="c" style="top:425.42px;left:783.1px;width:60px">-12</div>
<div class="c" style="top:425.42px;left:843.1px;width:60px">-19</div>
<div class="c" style="top:425.42px;left:903.1px;width:60px">-12</div>
<div class="c lab" style="top:437.9px;left:35px">Churn - Pro</div>
<div class="c" style="top:437.9px;left:183.1px;width:60px">-4</div>
<div class="c" style="top:437.9px;left:243.1px;width:60px">-7</div>
<div class="c" style="top:437.9px;left:303.1px;width:60px">-19</div>
<div class="c" style="top:437.9px;left:363.1px;width:60px">-35</div>
<div class="c" style="top:437.9px;left:423.1px;width:60px">-15</div>
<div class="c" style="top:437.9px;left:483.1px;width:60px">-22</div>
<div class="c" style="top:437.9px;left:543.1px;width:60px">-26</div>
<div class="c" style="top:437.9px;left:603.1px;width:60px">-5</div>
<div class="c" style="top:437.9px;left:663.1px;width:60px">-12</div>
<div class="c" style="top:437.9px;left:723.1px;width:60px">-34</div>
<div class="c" style="top:437.9px;left:783.1px;width:60px">-19</div>
<div class="c" style="top:437.9px;left:843.1px;width:60px">-16</div>
<div class="c" style="top:437.9px;left:903.1px;width:60px">-18</div>
<div class="c lab" style="top:450.38px;left:35px">Churn - Business</div>
<div class="c" style="top:450.38px;left:183.1px;width:60px">-4</div>
<div class="c" style="top:450.38px;left:243.1px;width:60px">-7</div>
<div class="c" style="top:450.38px;left:303.1px;width:60px">-19</div>
<div class="c" style="top:450.38px;left:363.1px;width:60px">-35</div>
<div class="c" style="top:450.38px;left:423.1px;width:60px">-15</div>
<div class="c" style="top:450.38px;left:483.1px;width:60px">-22</div>
<div class="c" style="top:450.38px;left:543.1px;width:60px">-26</div>
<div class="c" style="top:450.38px;left:603.1px;width:60px">-5</div>
<div class="c" style="top:450.38px;left:663.1px;width:60px">-12</div>
<div class="c" style="top:450.38px;left:723.1px;width:60px">-34</div>
<div class="c" style="top:450.38px;left:783.1px;width:60px">-19</div>
<div class="c" style="top:450.38px;left:843.1px;width:60px">-16</div>
<div class="c" style="top:450.38px;left:903.1px;width:60px">-18</div>
<div class="c lab" style="top:462.86px;left:35px">Churn - Enterprise</div>
<div class="c" style="top:462.86px;left:183.1px;width:60px">-4</div>
<div class="c" style="top:462.86px;left:243.1px;width:60px">-7</div>
<div class="c" style="top:462.86px;left:303.1px;width:60px">-19</div>
<div class="c" style="top:462.86px;left:363.1px;width:60px">-35</div>
<div class="c" style="top:462.86px;left:423.1px;width:60px">-15</div>
<div class="c" style="top:462.86px;left:483.1px;width:60px">-22</div>
<div class="c" style="top:462.86px;left:543.1px;width:60px">-26</div>
<div class="c" style="top:462.86px;left:603.1px;width:60px">-5</div>
<div class="c" style="top:462.86px;left:663.1px;width:60px">-12</div>
<div class="c" style="top:462.86px;left:723.1px;width:60px">-34</div>
<div class="c" style="top:462.86px;left:783.1px;width:60px">-19</div>
<div class="c" style="top:462.86px;left:843.1px;width:60px">-16</div>
<div class="c" style="top:462.86px;left:903.1px;width:60px">-18</div>
<div class="c lab" style="top:475.34px;left:35px">Total Subscriber Churn:</div>
<div class="c" style="top:475.34px;left:183.1px;width:60px">-25</div>
<div class="c" style="top:475.34px;left:243.1px;width:60px">-41</div>
<div class="c" style="top:475.34px;left:303.1px;width:60px">-70</div>
<div class="c" style="top:475.34px;left:363.1px;width:60px">-127</div>
<div class="c" style="top:475.34px;left:423.1px;width:60px">-87</div>
<div class="c" style="top:475.34px;left:483.1px;width:60px">-93</div>
<div class="c" style="top:475.34px;left:543.1px;width:60px">-98</div>
<div class="c" style="top:475.34px;left:603.1px;width:60px">-53</div>
<div class="c" style="top:475.34px;left:663.1px;width:60px">-56</div>
<div class="c" style="top:475.34px;left:723.1px;width:60px">-128</div>
<div class="c" style="top:475.34px;left:783.1px;width:60px">-83</div>
<div class="c" style="top:475.34px;left:843.1px;width:60px">-87</div>
<div class="c" style="top:475.34px;left:903.1px;width:60px">-79</div>
<div class="bluecell" style="top:488.32px;left:902.8px;width:59.3px;height:11.58px"></div>
<div class="c wt it" style="top:487.82px;left:903.1px;width:60px">Average</div>
<div class="c lft" style="top:487.82px;left:964.6px;width:22.4px">Churn</div>
<div class="c lab" style="top:500.3px;left:35px">Churn Rate - Basic Access</div>
<div class="c" style="top:500.3px;left:183.1px;width:60px">-2.53%</div>
<div class="c" style="top:500.3px;left:243.1px;width:60px">-2.48%</div>
<div class="c" style="top:500.3px;left:303.1px;width:60px">-2.42%</div>
<div class="c" style="top:500.3px;left:363.1px;width:60px">-3.77%</div>
<div class="c" style="top:500.3px;left:423.1px;width:60px">-1.80%</div>
<div class="c" style="top:500.3px;left:483.1px;width:60px">-3.04%</div>
<div class="c" style="top:500.3px;left:543.1px;width:60px">-2.14%</div>
<div class="c" style="top:500.3px;left:603.1px;width:60px">-2.07%</div>
<div class="c" style="top:500.3px;left:663.1px;width:60px">-1.60%</div>
<div class="c" style="top:500.3px;left:723.1px;width:60px">-1.89%</div>
<div class="c" style="top:500.3px;left:783.1px;width:60px">-1.85%</div>
<div class="c" style="top:500.3px;left:843.1px;width:60px">-1.72%</div>
<div class="c" style="top:500.3px;left:903.1px;width:60px">-2.28%</div>
<div class="c lft" style="top:500.3px;left:964.6px;width:22.4px">1.00%</div>
<div class="c lab" style="top:512.78px;left:35px">Churn Rate - Experience</div>
<div class="c" style="top:512.78px;left:183.1px;width:60px">-1.36%</div>
<div class="c" style="top:512.78px;left:243.1px;width:60px">-2.67%</div>
<div class="c" style="top:512.78px;left:303.1px;width:60px">-1.04%</div>
<div class="c" style="top:512.78px;left:363.1px;width:60px">-1.02%</div>
<div class="c" style="top:512.78px;left:423.1px;width:60px">-0.97%</div>
<div class="c" style="top:512.78px;left:483.1px;width:60px">-0.94%</div>
<div class="c" style="top:512.78px;left:543.1px;width:60px">-0.92%</div>
<div class="c" style="top:512.78px;left:603.1px;width:60px">-4.67%</div>
<div class="c" style="top:512.78px;left:663.1px;width:60px">-1.51%</div>
<div class="c" style="top:512.78px;left:723.1px;width:60px">-2.04%</div>
<div class="c" style="top:512.78px;left:783.1px;width:60px">-1.77%</div>
<div class="c" style="top:512.78px;left:843.1px;width:60px">-2.78%</div>
<div class="c" style="top:512.78px;left:903.1px;width:60px">-1.81%</div>
<div class="c lft" style="top:512.78px;left:964.6px;width:22.4px">1.00%</div>
<div class="c lab" style="top:525.26px;left:35px">Churn Rate - Premium</div>
<div class="c" style="top:525.26px;left:183.1px;width:60px">-0.66%</div>
<div class="c" style="top:525.26px;left:243.1px;width:60px">-1.08%</div>
<div class="c" style="top:525.26px;left:303.1px;width:60px">-0.85%</div>
<div class="c" style="top:525.26px;left:363.1px;width:60px">-2.07%</div>
<div class="c" style="top:525.26px;left:423.1px;width:60px">-6.71%</div>
<div class="c" style="top:525.26px;left:483.1px;width:60px">-3.04%</div>
<div class="c" style="top:525.26px;left:543.1px;width:60px">-2.05%</div>
<div class="c" style="top:525.26px;left:603.1px;width:60px">-2.17%</div>
<div class="c" style="top:525.26px;left:663.1px;width:60px">-1.57%</div>
<div class="c" style="top:525.26px;left:723.1px;width:60px">-1.82%</div>
<div class="c" style="top:525.26px;left:783.1px;width:60px">-1.94%</div>
<div class="c" style="top:525.26px;left:843.1px;width:60px">-2.87%</div>
<div class="c" style="top:525.26px;left:903.1px;width:60px">-2.24%</div>
<div class="c lft" style="top:525.26px;left:964.6px;width:22.4px">1.00%</div>
<div class="c lab" style="top:537.74px;left:35px">Churn Rate - Pro</div>
<div class="c" style="top:537.74px;left:183.1px;width:60px">-1.01%</div>
<div class="c" style="top:537.74px;left:243.1px;width:60px">-1.73%</div>
<div class="c" style="top:537.74px;left:303.1px;width:60px">-4.59%</div>
<div class="c" style="top:537.74px;left:363.1px;width:60px">-8.27%</div>
<div class="c" style="top:537.74px;left:423.1px;width:60px">-3.38%</div>
<div class="c" style="top:537.74px;left:483.1px;width:60px">-4.78%</div>
<div class="c" style="top:537.74px;left:543.1px;width:60px">-5.54%</div>
<div class="c" style="top:537.74px;left:603.1px;width:60px">-1.03%</div>
<div class="c" style="top:537.74px;left:663.1px;width:60px">-2.40%</div>
<div class="c" style="top:537.74px;left:723.1px;width:60px">-6.43%</div>
<div class="c" style="top:537.74px;left:783.1px;width:60px">-3.51%</div>
<div class="c" style="top:537.74px;left:843.1px;width:60px">-3.33%</div>
<div class="c" style="top:537.74px;left:903.1px;width:60px">-3.83%</div>
<div class="c lft" style="top:537.74px;left:964.6px;width:22.4px">1.00%</div>
<div class="c lab" style="top:550.22px;left:35px">Churn Rate - Business</div>
<div class="c" style="top:550.22px;left:183.1px;width:60px">-1.01%</div>
<div class="c" style="top:550.22px;left:243.1px;width:60px">-1.73%</div>
<div class="c" style="top:550.22px;left:303.1px;width:60px">-4.59%</div>
<div class="c" style="top:550.22px;left:363.1px;width:60px">-8.27%</div>
<div class="c" style="top:550.22px;left:423.1px;width:60px">-3.38%</div>
<div class="c" style="top:550.22px;left:483.1px;width:60px">-4.78%</div>
<div class="c" style="top:550.22px;left:543.1px;width:60px">-5.54%</div>
<div class="c" style="top:550.22px;left:603.1px;width:60px">-1.03%</div>
<div class="c" style="top:550.22px;left:663.1px;width:60px">-2.40%</div>
<div class="c" style="top:550.22px;left:723.1px;width:60px">-6.43%</div>
<div class="c" style="top:550.22px;left:783.1px;width:60px">-3.51%</div>
<div class="c" style="top:550.22px;left:843.1px;width:60px">-3.33%</div>
<div class="c" style="top:550.22px;left:903.1px;width:60px">-3.83%</div>
<div class="c lft" style="top:550.22px;left:964.6px;width:22.4px">1.00%</div>
</div>

<div id="tabs"></div>
<div style="position:absolute;left:0;top:577.3px;width:1000px;height:0.8px;background:#dcdcdc"></div>
<svg style="position:absolute;left:16px;top:565px" width="7" height="8" viewBox="0 0 7 8"><path d="M5 1 L2 4 L5 7" fill="none" stroke="#bcbcbc" stroke-width="0.9"/></svg>
<svg style="position:absolute;left:36px;top:565px" width="7" height="8" viewBox="0 0 7 8"><path d="M2 1 L5 4 L2 7" fill="none" stroke="#555" stroke-width="0.9"/></svg>
<div class="tab" style="left:78.7px;font-size:9.8px;transform-origin:0 0;transform:scaleX(0.963)">How To</div>
<div class="ytab" style="position:absolute;left:121px;top:559.2px;width:71px;height:17px"></div>
<div class="tab" style="left:127.5px;font-size:9.8px;transform-origin:0 0;transform:scaleX(0.924)">2025 Accounts</div>
<div style="position:absolute;left:197.5px;top:557px;width:103px;height:19.5px;background:#fff"></div>
<div class="tab" style="left:203.4px;top:559px;font-size:9.8px;transform-origin:0 0;transform:scaleX(0.925);color:#1f1f1f">2025 MRR Dashboard</div>
<div style="position:absolute;left:203px;top:574px;width:91px;height:1.3px;background:#1e7145"></div>
<div class="ytab" style="position:absolute;left:304.7px;top:559.2px;width:41.3px;height:17px"></div>
<div class="tab" style="left:310px;font-size:9.8px;transform-origin:0 0;transform:scaleX(0.879)">IS 2025</div>
<div class="tab" style="left:356.5px;font-size:9.8px;transform-origin:0 0;transform:scaleX(0.857)">CF 2025</div>
<div class="tab" style="left:406px;font-size:9.8px;transform-origin:0 0;transform:scaleX(0.851)">BS 2025</div>
<div class="tab" style="left:456.6px;font-size:9.8px;transform-origin:0 0;transform:scaleX(0.902)">Statements Summary 2025</div>
<div class="ytab" style="position:absolute;left:576px;top:559.2px;width:72.6px;height:17px"></div>
<div class="tab" style="left:583.5px;font-size:9.8px;transform-origin:0 0;transform:scaleX(0.910)">2026 Accounts</div>
<div class="tab" style="left:660px;font-size:9.8px;transform-origin:0 0;transform:scaleX(0.898)">2026 MRR Dashboard</div>
<div class="ytab" style="position:absolute;left:759.6px;top:559.2px;width:40.8px;height:17px"></div>
<div class="tab" style="left:765.6px;font-size:9.8px;transform-origin:0 0;transform:scaleX(0.870)">IS 2026</div>
<div class="tab" style="left:811.5px;font-size:9.8px;transform-origin:0 0;transform:scaleX(0.878)">CF 2026</div>
<div style="position:absolute;left:861.6px;top:560.5px;width:19px;height:17px;overflow:hidden"><div class="tab" style="left:0;top:0;font-size:9.8px;transform-origin:0 0;transform:scaleX(0.85)">BS 2026</div></div>
<div style="position:absolute;left:886.5px;top:567.8px;width:1.6px;height:1.6px;background:#444"></div><div style="position:absolute;left:889.7px;top:567.8px;width:1.6px;height:1.6px;background:#444"></div><div style="position:absolute;left:892.9px;top:567.8px;width:1.6px;height:1.6px;background:#444"></div>
<div style="position:absolute;left:907px;top:568px;width:8px;height:1px;background:#333"></div>
<div style="position:absolute;left:910.5px;top:564.5px;width:1px;height:8px;background:#333"></div>
<div style="position:absolute;left:931.5px;top:564px;width:1.5px;height:1.5px;background:#555"></div>
<div style="position:absolute;left:931.5px;top:567.5px;width:1.5px;height:1.5px;background:#555"></div>
<div style="position:absolute;left:931.5px;top:571px;width:1.5px;height:1.5px;background:#555"></div>
<svg style="position:absolute;left:945.5px;top:565px" width="6" height="8" viewBox="0 0 6 8"><path d="M5 0.5 L1 4 L5 7.5 Z" fill="#555"/></svg>
<div style="position:absolute;left:953.6px;top:566px;width:21px;height:5.6px;background:#777;border-radius:3px"></div>
<svg style="position:absolute;left:980.5px;top:565px" width="6" height="8" viewBox="0 0 6 8"><path d="M1 0.5 L5 4 L1 7.5 Z" fill="#555"/></svg>
<div id="status"></div>
<div style="position:absolute;left:8px;top:581.8px;font-size:7.6px;line-height:10px;color:#666;transform-origin:0 0;transform:scaleX(0.8)">Ready</div>
<svg style="position:absolute;left:39px;top:581.5px" width="9" height="9" viewBox="0 0 9 9"><rect x="0.5" y="1" width="8" height="7" fill="none" stroke="#555" stroke-width="0.9"/><line x1="0.5" y1="3" x2="8.5" y2="3" stroke="#555" stroke-width="0.8"/><circle cx="4.5" cy="5.5" r="1.5" fill="none" stroke="#555" stroke-width="0.8"/></svg>
<svg style="position:absolute;left:60px;top:581.5px" width="9" height="9" viewBox="0 0 9 9"><path d="M0.5 1 L8.5 1 M4.5 1 L4.5 4 L1.5 8.5 M4.5 4 L7.5 8.5 M2 5.5 L7 5.5" fill="none" stroke="#555" stroke-width="0.9"/></svg>
<div style="position:absolute;left:72px;top:581.8px;font-size:7.9px;line-height:10px;color:#222;font-weight:bold;transform-origin:0 0;transform:scaleX(0.83)">Accessibility: Investigate</div>
<div style="position:absolute;left:808px;top:578px;width:25px;height:14px;background:#e4e4e4"></div>
<svg style="position:absolute;left:815px;top:582px" width="10" height="9" viewBox="0 0 10 9"><rect x="0.5" y="0.5" width="9" height="8" fill="none" stroke="#444" stroke-width="1"/><line x1="0.5" y1="3.2" x2="9.5" y2="3.2" stroke="#444" stroke-width="0.8"/><line x1="0.5" y1="5.8" x2="9.5" y2="5.8" stroke="#444" stroke-width="0.8"/><line x1="3.5" y1="0.5" x2="3.5" y2="8.5" stroke="#444" stroke-width="0.8"/><line x1="6.5" y1="0.5" x2="6.5" y2="8.5" stroke="#444" stroke-width="0.8"/></svg>
<svg style="position:absolute;left:841px;top:582px" width="10" height="9" viewBox="0 0 10 9"><rect x="0.5" y="0.5" width="9" height="8" fill="none" stroke="#555" stroke-width="1"/><line x1="2.5" y1="1" x2="2.5" y2="8" stroke="#777" stroke-width="0.6"/><line x1="4.5" y1="1" x2="4.5" y2="8" stroke="#777" stroke-width="0.6"/><line x1="6.5" y1="1" x2="6.5" y2="8" stroke="#777" stroke-width="0.6"/></svg>
<svg style="position:absolute;left:867px;top:582px" width="10" height="9" viewBox="0 0 10 9"><rect x="0.5" y="0.5" width="9" height="8" fill="none" stroke="#555" stroke-width="1"/><path d="M3.5 0.5 L3.5 4.5 L6.5 4.5 L6.5 0.5" fill="none" stroke="#555" stroke-width="0.8"/></svg>
<div style="position:absolute;left:888px;top:586.5px;width:8px;height:1px;background:#666"></div>
<div style="position:absolute;left:897px;top:586.5px;width:68px;height:1px;background:#999"></div>
<div style="position:absolute;left:928.8px;top:582.5px;width:2.6px;height:8px;background:#444"></div>
<div style="position:absolute;left:964px;top:586.5px;width:7px;height:1px;background:#666"></div>
<div style="position:absolute;left:967px;top:583.5px;width:1px;height:7px;background:#666"></div>
<div style="position:absolute;left:979px;top:582px;font-size:7px;line-height:10px;color:#555;transform-origin:0 0;transform:scaleX(0.86)">100%</div>
<!-- vertical scrollbar -->
<div style="position:absolute;left:987px;top:49.5px;width:13px;height:510px;background:#fbfbfb"></div>
<svg style="position:absolute;left:990.5px;top:53px" width="7" height="6" viewBox="0 0 7 6"><path d="M0.5 5.5 L3.5 0.5 L6.5 5.5 Z" fill="#666"/></svg>
<div style="position:absolute;left:991px;top:62.7px;width:5.7px;height:363.3px;background:#6e6e6e;border-radius:3px"></div>
<svg style="position:absolute;left:990.5px;top:552px" width="7" height="6" viewBox="0 0 7 6"><path d="M0.5 0.5 L3.5 5.5 L6.5 0.5 Z" fill="#444"/></svg>

</body></html>
